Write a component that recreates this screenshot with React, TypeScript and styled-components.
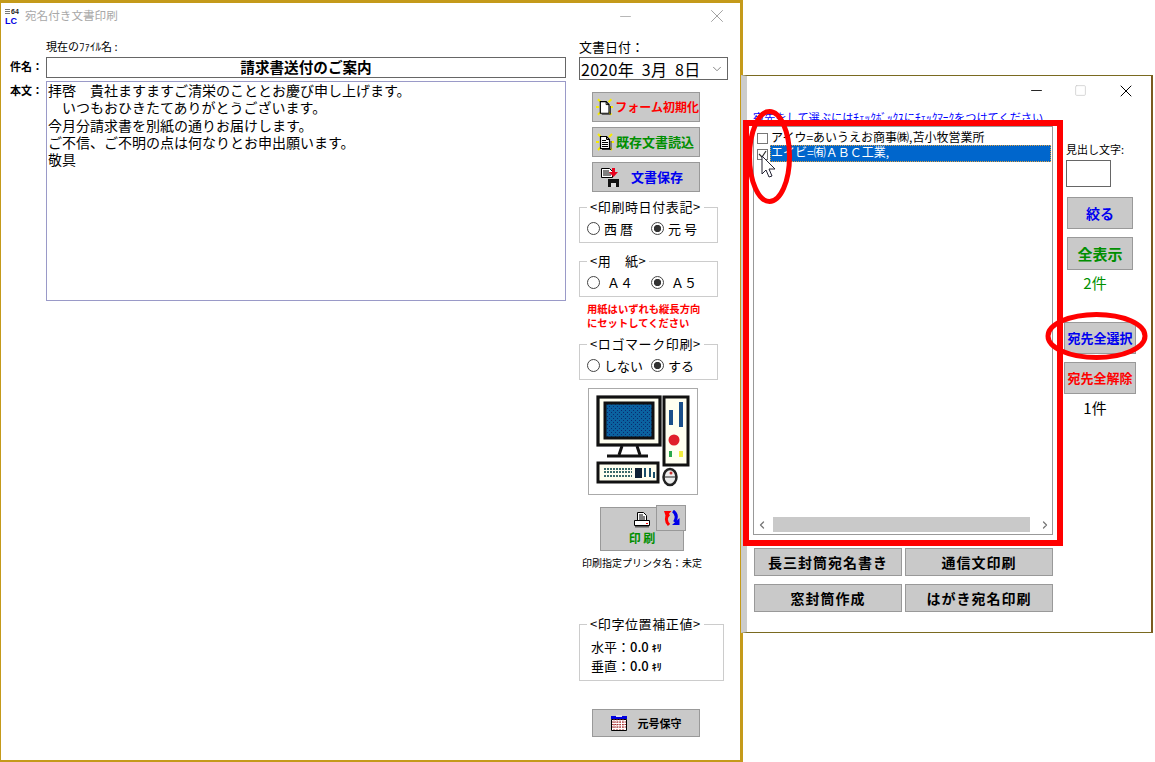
import styled, { createGlobalStyle } from "styled-components";
import { ChevronDown, ChevronLeft, ChevronRight, Minus, Square, X } from "lucide-react";

const GlobalStyle = createGlobalStyle`
  html, body {
    margin: 0;
    padding: 0;
    background: #fff;
  }
  body {
    font-family: "Noto Sans CJK JP", "Liberation Sans", sans-serif;
    color: #000;
    overflow: hidden;
  }
`;

const Desktop = styled.div`
  position: relative;
  width: 1155px;
  height: 762px;
  overflow: hidden;
  background: #fff;
`;

const MainWindow = styled.section`
  position: absolute;
  left: 0;
  top: 0;
  width: 743px;
  height: 762px;
  box-sizing: border-box;
  background: #fff;
  border: solid #c49a1a;
  border-width: 3px 3px 2px 1px;
  display: flex;
  flex-direction: column;
`;

const TitleBar = styled.header`
  height: 26px;
  display: flex;
  align-items: center;
  padding-left: 3px;
  flex: none;
`;

const TitleText = styled.span`
  margin: 0 0 3px 4px;
  font-size: 11.6px;
  color: #a8a8a8;
  flex: 1;
`;

const WinButton = styled.span<{ $w: number; $color?: string }>`
  width: ${(p) => p.$w}px;
  display: flex;
  justify-content: center;
  color: ${(p) => p.$color || "#000"};
`;

const FormGrid = styled.div`
  flex: 1;
  display: grid;
  grid-template-columns: 578px 1fr;
`;

const LeftColumn = styled.div`
  padding-top: 10px;
`;

const FileLabel = styled.div`
  margin-left: 45px;
  height: 18px;
  font-size: 11px;
  line-height: 14px;
`;

const FieldRow = styled.div<{ $mt?: number }>`
  display: flex;
  margin-top: ${(p) => p.$mt || 0}px;
`;

const FieldLabel = styled.label`
  width: 45px;
  box-sizing: border-box;
  padding: 2px 0 0 9px;
  font-size: 11px;
  font-weight: 700;
  line-height: 14px;
`;

const SubjectBox = styled.div`
  width: 520px;
  height: 21px;
  box-sizing: border-box;
  border: 1px solid #666;
  text-align: center;
  font-size: 14.6px;
  font-weight: 700;
  line-height: 17px;
`;

const BodyBox = styled.div`
  width: 520px;
  height: 220px;
  box-sizing: border-box;
  border: 1px solid #9a9ac8;
  padding: 0 1px;
  font-size: 14px;
  line-height: 17.3px;
  white-space: pre;
`;

const RightColumn = styled.div`
  display: flex;
  flex-direction: column;
  padding-top: 9px;
`;

const DateLabel = styled.div`
  font-size: 13px;
  line-height: 18px;
  height: 19px;
`;

const DateSelect = styled.div`
  width: 149px;
  height: 23px;
  box-sizing: border-box;
  border: 1px solid #666;
  display: flex;
  align-items: center;
  justify-content: space-between;
  padding: 0 3px 0 1px;
  font-size: 16px;
  letter-spacing: 0.3px;
  line-height: 20px;
  white-space: pre;
  color: #000;
  svg {
    color: #777;
  }
`;

const GreyButton = styled.button<{ $color?: string; $h?: number; $w?: number; $fs?: number }>`
  width: ${(p) => p.$w || 108}px;
  height: ${(p) => p.$h || 30}px;
  box-sizing: border-box;
  border: 1px solid #999;
  background: #c9c9c9;
  color: ${(p) => p.$color || "#000"};
  font-family: inherit;
  font-weight: 700;
  font-size: ${(p) => p.$fs || 13}px;
  line-height: 16px;
  padding: 0;
  display: flex;
  align-items: center;
  justify-content: center;
  white-space: nowrap;
`;

const SideButton = styled(GreyButton)<{ $pl: number }>`
  justify-content: flex-start;
  padding-left: ${(p) => p.$pl}px;
`;

const SideButtons = styled.div`
  display: flex;
  flex-direction: column;
  gap: 5px;
  margin: 12px 0 0 13px;
`;

const IconLabel = styled.span<{ $gap: number }>`
  margin-left: ${(p) => p.$gap}px;
`;

const Group = styled.fieldset<{ $w?: number; $h?: number; $mt: number }>`
  width: ${(p) => p.$w || 139}px;
  height: ${(p) => p.$h || 42}px;
  margin: ${(p) => p.$mt}px 0 0;
  box-sizing: border-box;
  border: 1px solid #ccc;
  padding: 0 0 0 7px;
  min-width: 0;
`;

const GroupTitle = styled.legend`
  font-size: 13px;
  letter-spacing: 0.6px;
  line-height: 12px;
  padding: 0 3px;
  margin-left: 0;
  white-space: nowrap;
`;

const RadioRow = styled.div`
  display: flex;
  align-items: center;
  height: 23px;
  margin-top: 4px;
`;

const RadioItem = styled.span<{ $w: number }>`
  width: ${(p) => p.$w}px;
  display: flex;
  align-items: center;
  gap: 4px;
  font-size: 13px;
  white-space: pre;
`;

const RadioDot = styled.i<{ $on?: boolean }>`
  width: 13px;
  height: 13px;
  box-sizing: border-box;
  border-radius: 50%;
  border: 1px solid #444;
  flex: none;
  background: ${(p) => (p.$on ? "radial-gradient(circle, #333 0 3.4px, #fff 3.9px)" : "#fff")};
`;

const PaperNote = styled.div`
  margin: 5px 0 0 8px;
  height: 27px;
  font-size: 10.3px;
  font-weight: 700;
  line-height: 14px;
  color: #f00;
  white-space: nowrap;
`;

const LogoFrame = styled.div`
  width: 110px;
  height: 107px;
  margin: 8px 0 0 9px;
  box-sizing: border-box;
  border: 1px solid #aaa;
`;

const PrintWrap = styled.div`
  position: relative;
  width: 84px;
  height: 44px;
  margin: 12px 0 0 21px;
`;

const PrintButton = styled(GreyButton)`
  flex-direction: column;
  color: #008f00;
  font-size: 12px;
  gap: 2px;
  white-space: pre;
`;

const SwapButton = styled(GreyButton)`
  position: absolute;
  right: -2px;
  top: -2px;
`;

const PrinterName = styled.div`
  margin: 5px 0 0 3px;
  font-size: 10px;
  line-height: 14px;
  white-space: nowrap;
`;

const OffsetBody = styled.div`
  margin: 8px 0 0 4px;
`;

const OffsetLine = styled.div`
  font-size: 13px;
  line-height: 18px;
  white-space: pre;
  b {
    font-weight: 500;
  }
`;

const SmallKana = styled.span`
  font-size: 10px;
  font-weight: 700;
`;

const SaveEraButton = styled(GreyButton)`
  margin: 28px 0 0 13px;
  font-size: 11px;
  height: 28px;
`;

const SubWindow = styled.section`
  position: absolute;
  left: 741px;
  top: 75px;
  width: 412px;
  height: 558px;
  box-sizing: border-box;
  background: #fff;
  border: 1px solid #7a6a20;
  border-left: 6px solid #ccc;
  border-right: 2px solid #7a5a20;
  display: flex;
  flex-direction: column;
`;

const SubTitleBar = styled.header`
  height: 29px;
  display: flex;
  justify-content: flex-end;
  align-items: center;
  padding-right: 1px;
  flex: none;
`;

const HintLink = styled.div`
  height: 21px;
  box-sizing: border-box;
  padding-top: 5px;
  margin-left: 6px;
  font-size: 11.2px;
  line-height: 14px;
  color: #00f;
  white-space: nowrap;
`;

const SubGrid = styled.div`
  display: grid;
  grid-template-columns: 319px 1fr;
`;

const ListColumn = styled.div`
  padding-left: 6px;
`;

const ListBox = styled.div`
  width: 300px;
  height: 409px;
  box-sizing: border-box;
  border: 1px solid #999;
  display: flex;
  flex-direction: column;
  padding: 3px 0 2px 3px;
`;

const ListRow = styled.div`
  height: 16px;
  display: flex;
  align-items: center;
  font-size: 12px;
  white-space: nowrap;
`;

const CheckMark = styled.i`
  width: 11px;
  height: 11px;
  box-sizing: border-box;
  border: 1px solid #777;
  background: #fff;
  flex: none;
  margin-right: 2px;
  display: flex;
  svg {
    display: block;
  }
`;

const RowText = styled.span<{ $selected?: boolean }>`
  flex: 1;
  height: ${(p) => (p.$selected ? 17 : 16)}px;
  margin: ${(p) => (p.$selected ? "-1px 1px 0 0" : "0 1px 0 0")};
  line-height: 14px;
  padding-left: 1px;
  box-sizing: border-box;
  color: ${(p) => (p.$selected ? "#fff" : "#000")};
  background: ${(p) => (p.$selected ? "#0066cc" : "transparent")};
  outline: ${(p) => (p.$selected ? "1px dotted #e0a040" : "none")};
  outline-offset: -1px;
`;

const ListSpacer = styled.div`
  flex: 1;
`;

const ScrollBar = styled.div`
  height: 15px;
  display: flex;
  align-items: center;
  margin-left: -3px;
  color: #777;
`;

const ScrollThumb = styled.div`
  flex: 1;
  height: 15px;
  background: #c9c9c9;
  margin: 0 7px 0 4px;
`;

const ScrollArrow = styled.span`
  width: 15px;
  display: flex;
  justify-content: center;
`;

const ListActions = styled.div`
  display: grid;
  grid-template-columns: 148px 148px;
  column-gap: 3px;
  row-gap: 8px;
  margin: 13px 0 0 1px;
`;

const ActionButton = styled(GreyButton)`
  width: 148px;
  height: 28px;
  font-size: 14px;
  letter-spacing: 1px;
`;

const SideColumn = styled.div`
  display: flex;
  flex-direction: column;
`;

const SearchLabel = styled.div`
  margin-top: 15px;
  font-size: 11px;
  line-height: 16px;
  height: 19px;
  white-space: nowrap;
`;

const SearchInput = styled.div`
  width: 45px;
  height: 27px;
  box-sizing: border-box;
  border: 1px solid #666;
`;

const Count = styled.div<{ $color?: string; $mt: number }>`
  width: 56px;
  margin: ${(p) => p.$mt}px 0 0 1px;
  text-align: center;
  font-size: 15px;
  line-height: 16px;
  color: ${(p) => p.$color || "#000"};
`;

const FilterButton = styled(GreyButton)<{ $mt: number }>`
  margin: ${(p) => p.$mt}px 0 0 1px;
`;

const BulkButton = styled(GreyButton)<{ $mt: number }>`
  margin: ${(p) => p.$mt}px 0 0 -2px;
`;

const RedFrame = styled.div`
  position: absolute;
  left: 743px;
  top: 120px;
  width: 320px;
  height: 426px;
  box-sizing: border-box;
  border: 6px solid #f00;
  pointer-events: none;
`;

const Overlay = styled.svg`
  position: absolute;
  left: 0;
  top: 0;
  pointer-events: none;
`;

function AppIcon() {
  return (
    <svg width="17" height="18" viewBox="0 0 17 18">
      <path d="M1 2.500h5M1 4.500h5M1 6.500h5" stroke="#777" fill="none" />
      <text x="7" y="7" fontSize="7" fontWeight="700" fontFamily="Liberation Sans" fill="#222">64</text>
      <text x="1" y="17" fontSize="9" fontWeight="700" fontFamily="Liberation Sans" fill="#0000e0">LC</text>
    </svg>
  );
}

function DocIcon({ lines }: { lines?: boolean }) {
  return (
    <svg width="18" height="18" viewBox="0 0 18 18">
      <path
        d="M2 1l3 3M0 9h3M2 17l3-3M16 1l-3 3M18 9h-3M16 17l-3-3"
        stroke="#f8ec00"
        strokeWidth="2"
        fill="none"
      />
      <path d="M4.500 3.500h6l3 3v9h-9z" fill="#fff" stroke="#000" strokeWidth="1.200" />
      <path d="M6 16.500h9V8" fill="none" stroke="#333" />
      <path d="M10.500 3.500v3h3" fill="none" stroke="#000" />
      {lines && <path d="M6 7.500h4M6 9.500h6M6 11.500h6M6 13.500h6" stroke="#000" />}
    </svg>
  );
}

function SaveIcon() {
  return (
    <svg width="18" height="20" viewBox="0 0 18 20">
      <path d="M.5 1.500h8l3 3v6h-11z" fill="#fff" stroke="#000" />
      <path d="M2 4h6M2 6h8M2 8h8" stroke="#000" />
      <path d="M7 12h11v8H7z" fill="#111" />
      <path d="M10 16h5v4h-5z" fill="#ddd" />
      <path d="M11 1h3v4h3l-4.500 5L8 5h3z" fill="#e8001c" />
    </svg>
  );
}

function PrinterIcon() {
  return (
    <svg width="16" height="16" viewBox="0 0 16 16">
      <path d="M3.500.5h6l3 3v5h-9z" fill="#fff" stroke="#000" />
      <path d="M5 3h4M5 5h6M5 7h6" stroke="#000" />
      <path d="M.5 8.500h15v5H.500z" fill="#fff" stroke="#000" />
      <path d="M1 14h14v1.500H1z" fill="#555" />
      <path d="M12 11h2v1h-2z" fill="#e00" />
    </svg>
  );
}

function SwapIcon() {
  return (
    <svg width="17" height="16" viewBox="0 0 17 16">
      <path d="M6 15C2.500 11 2.500 7 6 4" fill="none" stroke="#f00" strokeWidth="3" />
      <path d="M1 1h7.500L3 7z" fill="#f00" />
      <path d="M10 1c4 3 4 7 1.500 11" fill="none" stroke="#0000e8" strokeWidth="3" />
      <path d="M16.500 8v7H9z" fill="#0000e8" />
    </svg>
  );
}

function CalendarIcon() {
  return (
    <svg width="16" height="16" viewBox="0 0 16 16">
      <path d="M0 1h16v3H0z" fill="#0000e0" />
      <path d="M5 0h6v2H5z" fill="#dde" />
      <path d="M.5 4.500h15v11H.5z" fill="#fff" stroke="#000" />
      <path
        d="M3 4v11M6 4v11M9 4v11M12 4v11M1 7h14M1 9.500h14M1 12h14"
        stroke="#a33"
        strokeWidth="1"
        strokeDasharray="1.500 1"
      />
    </svg>
  );
}

function ComputerLogo() {
  return (
    <svg width="108" height="105" viewBox="0 0 108 105">
      <defs>
        <pattern id="screenDots" width="4" height="4" patternUnits="userSpaceOnUse">
          <rect width="4" height="4" fill="#0b62a0" />
          <rect x="0" y="1" width="1" height="1" fill="#0a2a70" />
          <rect x="2" y="3" width="1" height="1" fill="#0a2a70" />
        </pattern>
      </defs>
      <rect x="9" y="8" width="62" height="48" fill="#fffff0" stroke="#111" strokeWidth="3.200" />
      <rect x="16" y="14" width="48" height="35" fill="url(#screenDots)" stroke="#111" strokeWidth="3" />
      <path d="M33 57l-3 9M48 57l3 9" fill="none" stroke="#111" strokeWidth="3" />
      <path d="M18 67h41" stroke="#111" strokeWidth="3" />
      <rect x="75" y="8" width="24" height="68" fill="#fffff0" stroke="#111" strokeWidth="3" />
      <rect x="80" y="21" width="4" height="15" fill="#1a4f8a" />
      <rect x="90" y="13" width="4" height="25" fill="#1a4f8a" />
      <circle cx="85" cy="51" r="5.500" fill="#e0202a" />
      <rect x="80" y="62" width="3" height="6" fill="#2aa84a" />
      <rect x="90" y="62" width="4" height="6" fill="#f2ee40" />
      <rect x="9" y="74" width="60" height="19" fill="#fffff0" stroke="#111" strokeWidth="3" />
      <path d="M15 80h28M15 83h28M15 87h28" stroke="#3a6a6a" strokeWidth="2" strokeDasharray="2 1" />
      <rect x="46" y="79" width="7" height="10" fill="#123" />
      <path d="M56 79v9M61 79v9M65 83v6" stroke="#1a4f6a" strokeWidth="2" />
      <ellipse cx="81" cy="88" rx="6.500" ry="8" fill="#eee" stroke="#222" strokeWidth="2.500" />
      <path d="M75 88h12" stroke="#222" />
      <circle cx="82" cy="84" r="1.500" fill="#c33" />
    </svg>
  );
}

export default function App() {
  return (
    <Desktop>
      <GlobalStyle />
      <MainWindow>
        <TitleBar>
          <AppIcon />
          <TitleText>宛名付き文書印刷</TitleText>
          <WinButton $w={138} $color="#999">
            <Minus size={17} strokeWidth={1} />
          </WinButton>
          <WinButton $w={46} $color="#999">
            <X size={22} strokeWidth={1} />
          </WinButton>
        </TitleBar>
        <FormGrid>
          <LeftColumn>
            <FileLabel>現在のﾌｧｲﾙ名 :</FileLabel>
            <FieldRow>
              <FieldLabel>件名：</FieldLabel>
              <SubjectBox>請求書送付のご案内</SubjectBox>
            </FieldRow>
            <FieldRow $mt={3}>
              <FieldLabel>本文：</FieldLabel>
              <BodyBox>
                {"拝啓　貴社ますますご清栄のこととお慶び申し上げます。\n　いつもおひきたてありがとうございます。\n今月分請求書を別紙の通りお届けします。\nご不信、ご不明の点は何なりとお申出願います。\n敬具"}
              </BodyBox>
            </FieldRow>
          </LeftColumn>
          <RightColumn>
            <DateLabel>文書日付：</DateLabel>
            <DateSelect>
              <span>2020年  3月  8日</span>
              <ChevronDown size={14} strokeWidth={1.5} />
            </DateSelect>
            <SideButtons>
              <SideButton $pl={3} $color="#f00" $fs={12}>
                <DocIcon />
                <IconLabel $gap={2}>フォーム初期化</IconLabel>
              </SideButton>
              <SideButton $pl={3} $color="#008f00">
                <DocIcon lines />
                <IconLabel $gap={2}>既存文書読込</IconLabel>
              </SideButton>
              <SideButton $pl={8} $color="#0000f0">
                <SaveIcon />
                <IconLabel $gap={12}>文書保存</IconLabel>
              </SideButton>
            </SideButtons>
            <Group $mt={9}>
              <GroupTitle>&lt;印刷時日付表記&gt;</GroupTitle>
              <RadioRow>
                <RadioItem $w={64}>
                  <RadioDot />西 暦
                </RadioItem>
                <RadioItem $w={60}>
                  <RadioDot $on />元 号
                </RadioItem>
              </RadioRow>
            </Group>
            <Group $mt={12}>
              <GroupTitle>&lt;用　紙&gt;</GroupTitle>
              <RadioRow>
                <RadioItem $w={64}>
                  <RadioDot /> Ａ４
                </RadioItem>
                <RadioItem $w={60}>
                  <RadioDot $on /> Ａ５
                </RadioItem>
              </RadioRow>
            </Group>
            <PaperNote>
              用紙はいずれも縦長方向
              <br />
              にセットしてください
            </PaperNote>
            <Group $mt={9}>
              <GroupTitle>&lt;ロゴマーク印刷&gt;</GroupTitle>
              <RadioRow>
                <RadioItem $w={64}>
                  <RadioDot />しない
                </RadioItem>
                <RadioItem $w={60}>
                  <RadioDot $on />する
                </RadioItem>
              </RadioRow>
            </Group>
            <LogoFrame>
              <ComputerLogo />
            </LogoFrame>
            <PrintWrap>
              <PrintButton $w={84} $h={44}>
                <PrinterIcon />
                <span>印 刷</span>
              </PrintButton>
              <SwapButton $w={30} $h={26}>
                <SwapIcon />
              </SwapButton>
            </PrintWrap>
            <PrinterName>印刷指定プリンタ名：未定</PrinterName>
            <Group $w={145} $h={63} $mt={48}>
              <GroupTitle>&lt;印字位置補正値&gt;</GroupTitle>
              <OffsetBody>
                <OffsetLine>
                  水平：<b>0.0</b> <SmallKana>ｷﾘ</SmallKana>
                </OffsetLine>
                <OffsetLine>
                  垂直：<b>0.0</b> <SmallKana>ｷﾘ</SmallKana>
                </OffsetLine>
              </OffsetBody>
            </Group>
            <SaveEraButton>
              <CalendarIcon />
              <IconLabel $gap={11}>元号保守</IconLabel>
            </SaveEraButton>
          </RightColumn>
        </FormGrid>
      </MainWindow>

      <SubWindow>
        <SubTitleBar>
          <WinButton $w={44}>
            <Minus size={17} strokeWidth={1.2} />
          </WinButton>
          <WinButton $w={44} $color="#ccc">
            <Square size={13} strokeWidth={1.4} />
          </WinButton>
          <WinButton $w={48}>
            <X size={20} strokeWidth={1.2} />
          </WinButton>
        </SubTitleBar>
        <HintLink>宛先をして選ぶにはﾁｪｯｸﾎﾞｯｸｽにﾁｪｯｸﾏｰｸをつけてください</HintLink>
        <SubGrid>
          <ListColumn>
            <ListBox>
              <ListRow>
                <CheckMark />
                <RowText>アイウ=あいうえお商事㈱,苫小牧営業所</RowText>
              </ListRow>
              <ListRow>
                <CheckMark>
                  <svg width="9" height="9" viewBox="0 0 9 9">
                    <path d="M1 4l3 3 4-6" fill="none" stroke="#333" strokeWidth="1.200" />
                  </svg>
                </CheckMark>
                <RowText $selected>エイビ=㈲ＡＢＣ工業,</RowText>
              </ListRow>
              <ListSpacer />
              <ScrollBar>
                <ScrollArrow>
                  <ChevronLeft size={12} strokeWidth={2.5} />
                </ScrollArrow>
                <ScrollThumb />
                <ScrollArrow>
                  <ChevronRight size={12} strokeWidth={2.5} />
                </ScrollArrow>
              </ScrollBar>
            </ListBox>
            <ListActions>
              <ActionButton>長三封筒宛名書き</ActionButton>
              <ActionButton>通信文印刷</ActionButton>
              <ActionButton>窓封筒作成</ActionButton>
              <ActionButton>はがき宛名印刷</ActionButton>
            </ListActions>
          </ListColumn>
          <SideColumn>
            <SearchLabel>見出し文字:</SearchLabel>
            <SearchInput />
            <FilterButton $w={66} $h={32} $mt={10} $color="#0000f0" $fs={14}>絞る</FilterButton>
            <FilterButton $w={66} $h={33} $mt={8} $color="#008f00" $fs={15}>全表示</FilterButton>
            <Count $color="#008f00" $mt={5}>2件</Count>
            <BulkButton $w={72} $h={32} $mt={31} $color="#0000f0">宛先全選択</BulkButton>
            <BulkButton $w={72} $h={32} $mt={8} $color="#f00">宛先全解除</BulkButton>
            <Count $mt={6}>1件</Count>
          </SideColumn>
        </SubGrid>
      </SubWindow>

      <RedFrame />
      <Overlay width="1155" height="762" viewBox="0 0 1155 762">
        <ellipse cx="769.500" cy="156.500" rx="20" ry="45" fill="none" stroke="#f00" strokeWidth="5" />
        <ellipse cx="1096.500" cy="336" rx="48.500" ry="21.500" fill="none" stroke="#f00" strokeWidth="5" />
        <path d="M762 156v18l4-4 3 7 3-1-3-7h6z" fill="#fff" stroke="#223" strokeWidth="1" />
      </Overlay>
    </Desktop>
  );
}
